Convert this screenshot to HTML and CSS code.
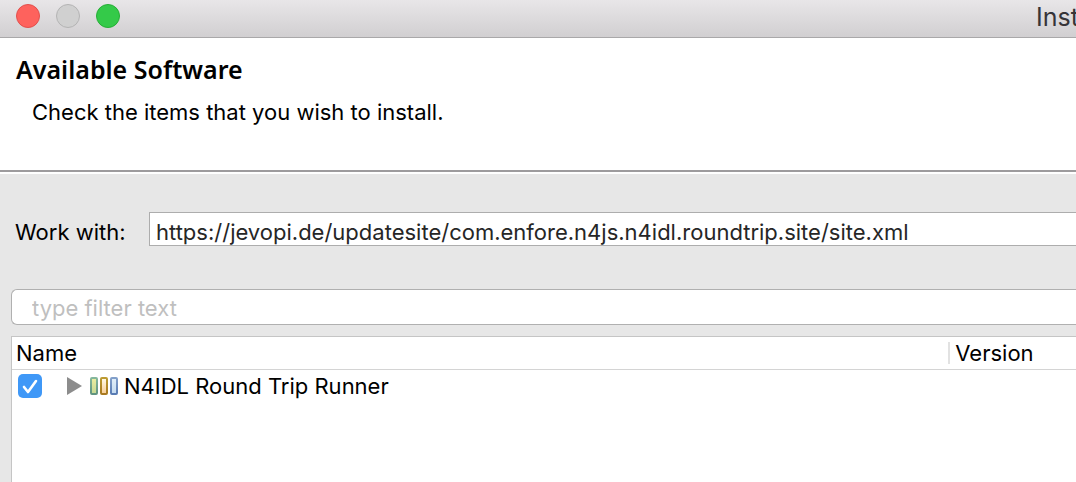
FILE: index.html
```html
<!DOCTYPE html>
<html lang="en">
<head>
<meta charset="utf-8">
<title>Install</title>
<link rel="stylesheet" href="styles.css">
</head>
<body>
<div class="window">
  <header class="titlebar">
    <div class="lights">
      <button class="light close" type="button" aria-label="Close"></button>
      <button class="light minimize" type="button" aria-label="Minimize" disabled></button>
      <button class="light expand" type="button" aria-label="Zoom"></button>
    </div>
    <div class="caption">Install</div>
  </header>
  <section class="intro">
    <h1>Available Software</h1>
    <p>Check the items that you wish to install.</p>
  </section>
  <main class="content">
    <div class="site-row">
      <label for="site">Work with:</label>
      <input class="site" id="site" type="text" spellcheck="false" value="https://jevopi.de/updatesite/com.enfore.n4js.n4idl.roundtrip.site/site.xml">
    </div>
    <input class="filter" type="text" placeholder="type filter text" aria-label="Filter">
    <div class="list">
      <table>
        <colgroup><col class="name-col"><col></colgroup>
        <thead>
          <tr><th scope="col">Name</th><th scope="col"><div class="divided">Version</div></th></tr>
        </thead>
        <tbody>
          <tr>
            <td>
              <div class="item">
                <input class="check" id="runner" type="checkbox" checked>
                <button class="expander" type="button" aria-label="Expand">
                  <svg width="15" height="18" viewBox="0 0 15 18"><path d="M0 0L15 9L0 18Z" fill="#8c8c8c"/></svg>
                </button>
                <svg class="category" width="28" height="18" viewBox="0 0 28 18" aria-hidden="true">
                  <defs>
                    <linearGradient id="g" x2="0" y2="1"><stop stop-color="#eeeea0"/><stop offset="1" stop-color="#c3d794"/></linearGradient>
                    <linearGradient id="o" x2="0" y2="1"><stop stop-color="#fffbea"/><stop offset="1" stop-color="#f8cd96"/></linearGradient>
                    <linearGradient id="b" x2="0" y2="1"><stop stop-color="#e2eff8"/><stop offset="1" stop-color="#c3daf0"/></linearGradient>
                    <linearGradient id="gs" x2="0" y2="1"><stop stop-color="#84b79b"/><stop offset="1" stop-color="#60937f"/></linearGradient>
                    <linearGradient id="os" x2="0" y2="1"><stop stop-color="#bd9b32"/><stop offset="1" stop-color="#a8791f"/></linearGradient>
                    <linearGradient id="bs" x2="0" y2="1"><stop stop-color="#829fca"/><stop offset="1" stop-color="#587bb3"/></linearGradient>
                  </defs>
                  <g stroke-width="2">
                    <rect x="1" y="1" width="6" height="16" rx="1" fill="url(#g)" stroke="url(#gs)"/>
                    <rect x="11" y="1" width="6" height="16" rx="1" fill="url(#o)" stroke="url(#os)"/>
                    <rect x="21" y="1" width="6" height="16" rx="1" fill="url(#b)" stroke="url(#bs)"/>
                  </g>
                </svg>
                <label for="runner">N4IDL Round Trip Runner</label>
              </div>
            </td>
            <td></td>
          </tr>
        </tbody>
      </table>
    </div>
  </main>
</div>
</body>
</html>
```
FILE: styles.css
```css
* { box-sizing: border-box; }

body {
  margin: 0;
  overflow-x: hidden;
  color: #000;
  background: #e7e7e7;
  font: 22px/28px Inter, "Liberation Sans", sans-serif;
}

input, button { font: inherit; margin: 0; }

.window {
  display: flex;
  flex-direction: column;
  min-height: 100vh;
}

.titlebar {
  display: flex;
  justify-content: space-between;
  height: 38px;
  padding-left: 16px;
  background: linear-gradient(#e8e6e8, #d1cfd1);
  border-bottom: 1px solid #a9a8a9;
  overflow: hidden;
}

.lights {
  display: flex;
  gap: 16px;
  padding-top: 4px;
}

.light {
  width: 24px;
  height: 24px;
  padding: 0;
  border: 1px solid;
  border-radius: 50%;
}

.close { background: #fe625d; border-color: #e2504d; }
.minimize { background: #d0d0d0; border-color: #b4b4b4; }
.expand { background: #34ca49; border-color: #26ae36; }

.caption {
  width: 40px;
  padding-top: 3px;
  color: #363438;
  font-size: 25px;
  white-space: nowrap;
}

.intro {
  height: 136px;
  padding: 15px 16px;
  background: #fff;
  border-bottom: 2px solid #fff;
  box-shadow: inset 0 -2px #9d9b9d;
}

h1 {
  margin: 0;
  font: 600 25px/32px "Noto Sans", sans-serif;
}

p { margin: 13px 0 0 16px; }

.content {
  display: flex;
  flex: 1;
  flex-direction: column;
  padding: 38px 0 0 11px;
}

.site-row {
  display: flex;
  align-items: center;
  padding-left: 4px;
}

.site-row label { width: 134px; padding-top: 6px; white-space: nowrap; }

.site {
  flex: 1;
  min-width: 0;
  height: 34px;
  padding: 6px 6px 0;
  color: #262626;
  background: #fff;
  border: 1px solid #adadad;
  border-right: 0;
}

.filter {
  height: 36px;
  margin-top: 43px;
  padding: 2px 20px 0;
  background: #fff;
  border: 1px solid #b0b0b0;
  border-right: 0;
  border-radius: 6px 0 0 6px;
}

.filter::placeholder { color: #bfbfbf; }

.list {
  flex: 1;
  margin-top: 11px;
  background: #fff;
  border: solid #c5c5c5;
  border-width: 1px 0 0 1px;
}

table {
  width: 100%;
  table-layout: fixed;
  border-collapse: separate;
  border-spacing: 0;
}

.name-col { width: 88%; }

th {
  height: 33px;
  padding: 0 0 0 4px;
  font-weight: normal;
  text-align: left;
  border-bottom: 1px solid #d4d4d4;
}

th + th { padding-left: 0; }

.divided {
  padding-left: 5px;
  line-height: 22px;
  border-left: 2px solid #e2e2e2;
}

td { padding: 0; }

.item {
  display: flex;
  align-items: center;
  height: 32px;
  padding-left: 6px;
}

.check {
  appearance: none;
  width: 24px;
  height: 24px;
  border-radius: 5px;
  background: #3f98f7 url("data:image/svg+xml,%3Csvg xmlns='http://www.w3.org/2000/svg' viewBox='0 0 24 24'%3E%3Cpath d='M6 13L10 18L18 7' fill='none' stroke='white' stroke-width='2.6' stroke-linecap='round' stroke-linejoin='round'/%3E%3C/svg%3E");
}

.expander {
  display: flex;
  margin-left: 25px;
  padding: 0;
  background: none;
  border: 0;
}

.category { margin: 0 6px 0 8px; }
```
